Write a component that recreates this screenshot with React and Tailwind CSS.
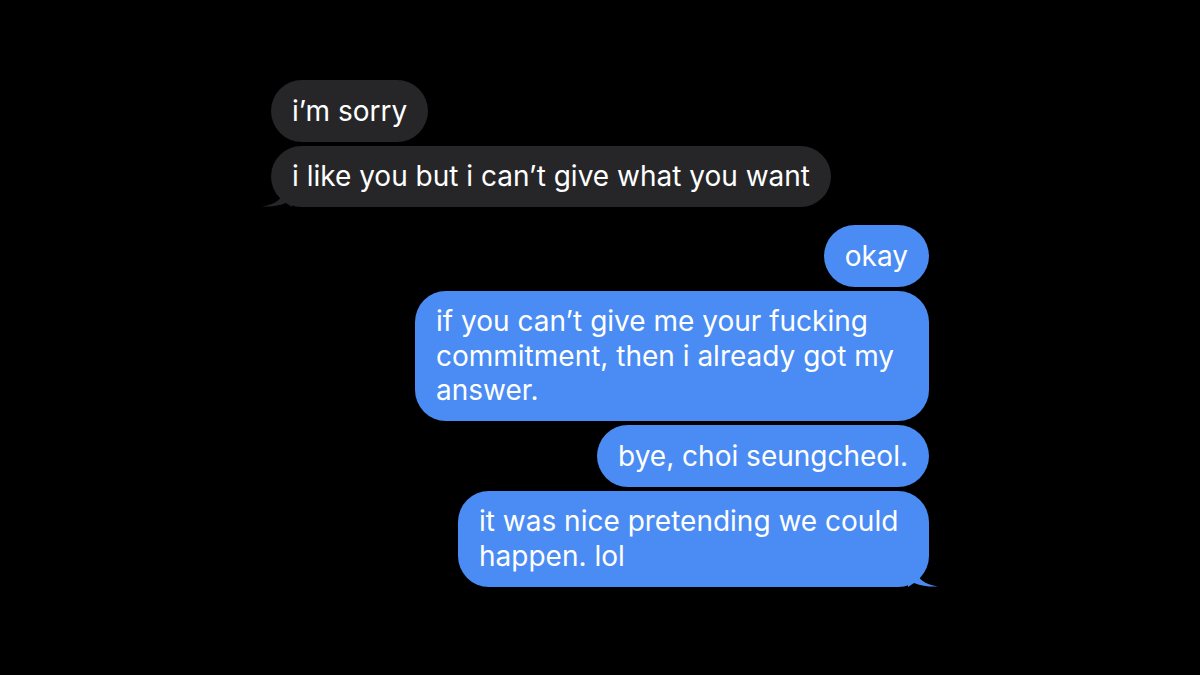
const font = { fontFamily: 'Inter, "Liberation Sans", sans-serif' };

function Bubble({ side, tail, className = '', children }) {
  const gray = side === 'left';
  return (
    <div className={`relative ${gray ? 'self-start' : 'self-end'} ${className}`}>
      <div
        className={`relative z-10 rounded-[31px] px-[21px] py-[13.5px] text-[28px] leading-[34.5px] text-white ${
          gray ? 'bg-[#262628]' : 'bg-[#4a8cf4]'
        }`}
      >
        {children}
      </div>
      {tail && gray && (
        <svg className="absolute bottom-0 -left-[9px] z-0" width="30" height="22" viewBox="0 0 30 22">
          <path d="M20 0 L20 8 C20 14 14 19 0 21.5 C8 22 16 21 24 18 L30 22 L30 0 Z" fill="#262628" />
        </svg>
      )}
      {tail && !gray && (
        <svg className="absolute bottom-0 -right-[9px] z-0" width="30" height="22" viewBox="0 0 30 22">
          <path d="M10 0 L10 8 C10 14 16 19 30 21.5 C22 22 14 21 6 18 L0 22 L0 0 Z" fill="#4a8cf4" />
        </svg>
      )}
    </div>
  );
}

export default function App() {
  return (
    <div className="min-h-[675px] w-full bg-black pt-[80px]" style={font}>
      <div className="mx-auto flex w-[658px] flex-col">
        <div className="flex flex-col gap-[4px]">
          <Bubble side="left">i’m sorry</Bubble>
          <Bubble side="left" tail>i like you but i can’t give what you want</Bubble>
        </div>
        <div className="mt-[18px] flex flex-col gap-[4px]">
          <Bubble side="right">okay</Bubble>
          <Bubble side="right" className="w-[514px]">
            if you can’t give me your fucking
            <br />
            commitment, then i already got my
            <br />
            answer.
          </Bubble>
          <Bubble side="right">bye, choi seungcheol.</Bubble>
          <Bubble side="right" tail className="w-[471px]">
            it was nice pretending we could
            <br />
            happen. lol
          </Bubble>
        </div>
      </div>
    </div>
  );
}
